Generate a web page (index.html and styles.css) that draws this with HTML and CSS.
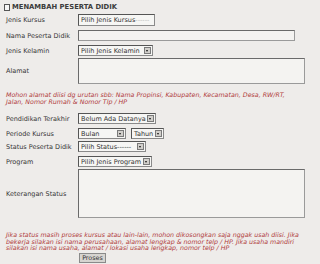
FILE: index.html
```html
<!DOCTYPE html>
<html>
<head>
<meta charset="utf-8">
<link rel="stylesheet" href="styles.css">
</head>
<body>
<div class="form">
  <div class="title"><span class="chk"></span>MENAMBAH PESERTA DIDIK</div>

  <div class="row r-kursus">
    <span class="lbl">Jenis Kursus</span>
    <span class="sel w-kursus">Pilih Jenis Kursus<span class="dash">------</span></span>
  </div>

  <div class="row r-nama">
    <span class="lbl">Nama Peserta Didik</span>
    <span class="inp"></span>
  </div>

  <div class="row r-kelamin">
    <span class="lbl">Jenis Kelamin</span>
    <span class="sel w-kelamin">Pilih Jenis Kelamin<span class="arr"></span></span>
  </div>

  <div class="row r-alamat">
    <span class="lbl">Alamat</span>
    <span class="area a-alamat"></span>
  </div>

  <p class="note n1">Mohon alamat diisi dg urutan sbb: Nama Propinsi, Kabupaten, Kecamatan, Desa, RW/RT,<br>Jalan, Nomor Rumah &amp; Nomor Tlp / HP</p>

  <div class="row r-pend">
    <span class="lbl">Pendidikan Terakhir</span>
    <span class="sel w-pend">Belum Ada Datanya<span class="arr"></span></span>
  </div>

  <div class="row r-periode">
    <span class="lbl">Periode Kursus</span>
    <span class="sel w-bulan">Bulan<span class="arr"></span></span>
    <span class="sel w-tahun">Tahun<span class="arr"></span></span>
  </div>

  <div class="row r-status">
    <span class="lbl">Status Peserta Didik</span>
    <span class="sel w-status">Pilih Status------<span class="arr"></span></span>
  </div>

  <div class="row r-program">
    <span class="lbl">Program</span>
    <span class="sel w-program">Pilih Jenis Program<span class="arr"></span></span>
  </div>

  <div class="row r-ket">
    <span class="lbl">Keterangan Status</span>
    <span class="area a-ket"></span>
  </div>

  <p class="note n2">Jika status masih proses kursus atau lain-lain, mohon dikosongkan saja nggak usah diisi. Jika<br>bekerja silakan isi nama perusahaan, alamat lengkap &amp; nomor telp / HP. Jika usaha mandiri<br>silakan isi nama usaha, alamat / lokasi usaha lengkap, nomor telp / HP</p>

  <div class="actions"><span class="btn">Proses</span></div>
</div>
</body>
</html>
```

FILE: styles.css
```css
html, body {
  margin: 0;
  padding: 0;
  background: #eeecea;
}
body {
  width: 320px;
  height: 264px;
  overflow: hidden;
  font-family: "DejaVu Sans", Verdana, sans-serif;
  font-size: 6.5px;
  color: #363636;
}
.form {
  display: flex;
  flex-direction: column;
  padding: 3px 0 0 6px;
}
.title {
  display: flex;
  align-items: center;
  gap: 2px;
  margin-left: -2px;
  height: 8px;
  font-size: 6.8px;
  font-weight: bold;
  color: #3c3c3c;
}
.chk {
  width: 4px;
  height: 5px;
  border: 1px solid #555;
  background: #f6f6f6;
}
.row {
  display: flex;
  align-items: center;
  gap: 7px;
}
.lbl {
  width: 65px;
  flex: none;
  white-space: nowrap;
}
.sel {
  position: relative;
  box-sizing: border-box;
  height: 11px;
  display: flex;
  align-items: center;
  padding-left: 2px;
  background: #f6f6f4;
  border: 1px solid #8a8a8a;
  border-top-color: #555;
  border-left-color: #555;
  white-space: nowrap;
  overflow: hidden;
  color: #333;
}
.dash {
  color: #b8b8b8;
}
.arr {
  position: absolute;
  right: 1px;
  top: 1px;
  width: 7px;
  height: 7px;
  box-sizing: border-box;
  background: #d2d0cc;
  border: 1px solid #7a7a7a;
}
.arr::after {
  content: "";
  position: absolute;
  left: 1px;
  top: 2px;
  border-left: 1.5px solid transparent;
  border-right: 1.5px solid transparent;
  border-top: 2px solid #111;
}
.inp, .area {
  box-sizing: border-box;
  background: #f4f3f1;
  border: 1px solid #9a9a9a;
  border-top-color: #6a6a6a;
  border-left-color: #6a6a6a;
}
.inp { width: 217px; height: 11px; }
.area { width: 227px; }
.a-alamat { height: 26px; }
.a-ket { height: 49px; }

.w-kursus { width: 77px; height: 12px; }
.w-kelamin { width: 75px; }
.w-pend { width: 78px; }
.w-bulan { width: 48px; }
.w-tahun { width: 33px; margin-left: -2px; }
.w-status { width: 68px; }
.w-program { width: 74px; }

.r-kursus { margin-top: 3px; }
.r-nama { margin-top: 4px; }
.r-kelamin { margin-top: 4px; }
.r-alamat { margin-top: 2px; }
.r-pend { margin-top: 8px; }
.r-periode { margin-top: 4px; }
.r-status { margin-top: 2px; }
.r-program { margin-top: 4px; }
.r-ket { margin-top: 2px; }

.note {
  margin: 0;
  font-style: italic;
  font-size: 6.3px;
  line-height: 6.5px;
  color: #b03a3a;
  white-space: nowrap;
}
.n1 { margin-top: 8px; }
.n2 { margin-top: 14px; }

.actions {
  display: flex;
  padding-left: 73px;
  margin-top: 1px;
}
.btn {
  box-sizing: border-box;
  width: 27px;
  height: 10px;
  display: flex;
  align-items: center;
  justify-content: center;
  background: #d6d4d0;
  border: 1px solid #8a8a8a;
  color: #333;
  font-size: 6.4px;
}
```
